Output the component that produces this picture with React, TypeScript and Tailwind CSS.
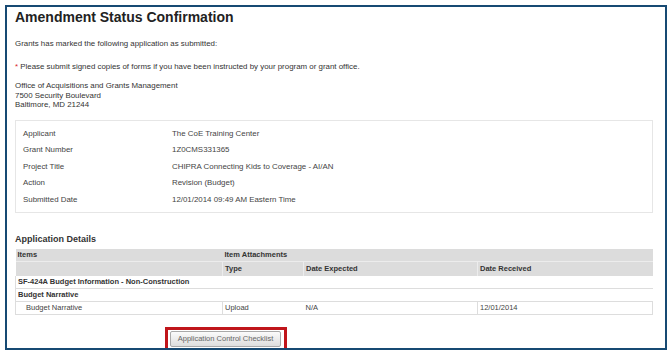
import React from "react";

const rows: [string, string][] = [
  ["Applicant", "The CoE Training Center"],
  ["Grant Number", "1Z0CMS331365"],
  ["Project Title", "CHIPRA Connecting Kids to Coverage - AI/AN"],
  ["Action", "Revision (Budget)"],
  ["Submitted Date", "12/01/2014 09:49 AM Eastern Time"],
];

export default function App() {
  return (
    <div className="w-[670px] h-[355px] bg-white pt-[5px] pl-[5px] font-['Liberation_Sans',Arial,sans-serif] text-[#333]">
      <div className="w-[662px] h-[345px] border-2 border-[#174a73] overflow-hidden pl-[8px] pr-[12px]">
        <h1 className="mt-[1px] text-[14px] font-bold leading-[19px] text-[#222]">Amendment Status Confirmation</h1>

        <p className="mt-[12px] text-[7.9px] leading-[10px]">Grants has marked the following application as submitted:</p>

        <p className="mt-[13px] text-[7.9px] leading-[10px]">
          <span className="text-[#d9262a]">*</span> Please submit signed copies of forms if you have been instructed by your program or grant office.
        </p>

        <div className="mt-[9px] text-[7.9px] leading-[9.5px]">
          <div>Office of Acquisitions and Grants Management</div>
          <div>7500 Security Boulevard</div>
          <div>Baltimore, MD 21244</div>
        </div>

        <div className="mt-[10px] h-[93px] border border-[#e6e6e6] py-[5px] pl-[7px]">
          {rows.map(([k, v]) => (
            <div key={k} className="flex h-[16.5px] items-center text-[7.9px] text-[#444]">
              <div className="w-[149px]">{k}</div>
              <div>{v}</div>
            </div>
          ))}
        </div>

        <h2 className="mt-[20px] text-[9px] font-bold leading-[12px] text-[#333]">Application Details</h2>

        <table className="mt-[4px] w-[637px] border-collapse text-[7.5px] leading-[12px] table-fixed">
          <colgroup>
            <col className="w-[207px]" />
            <col className="w-[81px]" />
            <col className="w-[174px]" />
            <col className="w-[175px]" />
          </colgroup>
          <thead>
            <tr className="bg-[#dcdcdc] h-[13px] font-bold">
              <td className="px-[2px] border-b border-[#ececec]">Items</td>
              <td colSpan={3} className="px-[2px] border-b border-[#ececec]">Item Attachments</td>
            </tr>
            <tr className="bg-[#dcdcdc] h-[14px] font-bold">
              <td className="px-[2px]"></td>
              <td className="px-[2px] border-l border-[#ececec]">Type</td>
              <td className="px-[2px] border-l border-[#ececec]">Date Expected</td>
              <td className="px-[2px] border-l border-[#ececec]">Date Received</td>
            </tr>
          </thead>
          <tbody>
            <tr className="h-[12px] font-bold border-b border-l border-[#dddddd]">
              <td colSpan={4} className="px-[2px]">SF-424A Budget Information - Non-Construction</td>
            </tr>
            <tr className="h-[12px] font-bold border-b border-l border-[#dddddd]">
              <td colSpan={4} className="px-[2px]">Budget Narrative</td>
            </tr>
            <tr className="h-[13px] border-b border-l border-r border-[#dddddd] text-[#444]">
              <td className="pl-[10px]">Budget Narrative</td>
              <td className="px-[2px] border-l border-[#dddddd]">Upload</td>
              <td className="px-[2px]">N/A</td>
              <td className="px-[2px] border-l border-[#dddddd]">12/01/2014</td>
            </tr>
          </tbody>
        </table>

        <div className="mt-[12px] ml-[150px] flex w-[122px] h-[30px] items-start border-[3px] border-[#c0151b] pt-[1px] pl-[2px]">
          <button className="h-[16px] w-[111px] rounded-[2px] border border-[#a9a9a9] bg-gradient-to-b from-[#fbfbfb] to-[#dedede] text-[7.5px] leading-[14px] text-[#666]">
            Application Control Checklist
          </button>
        </div>
      </div>
    </div>
  );
}
